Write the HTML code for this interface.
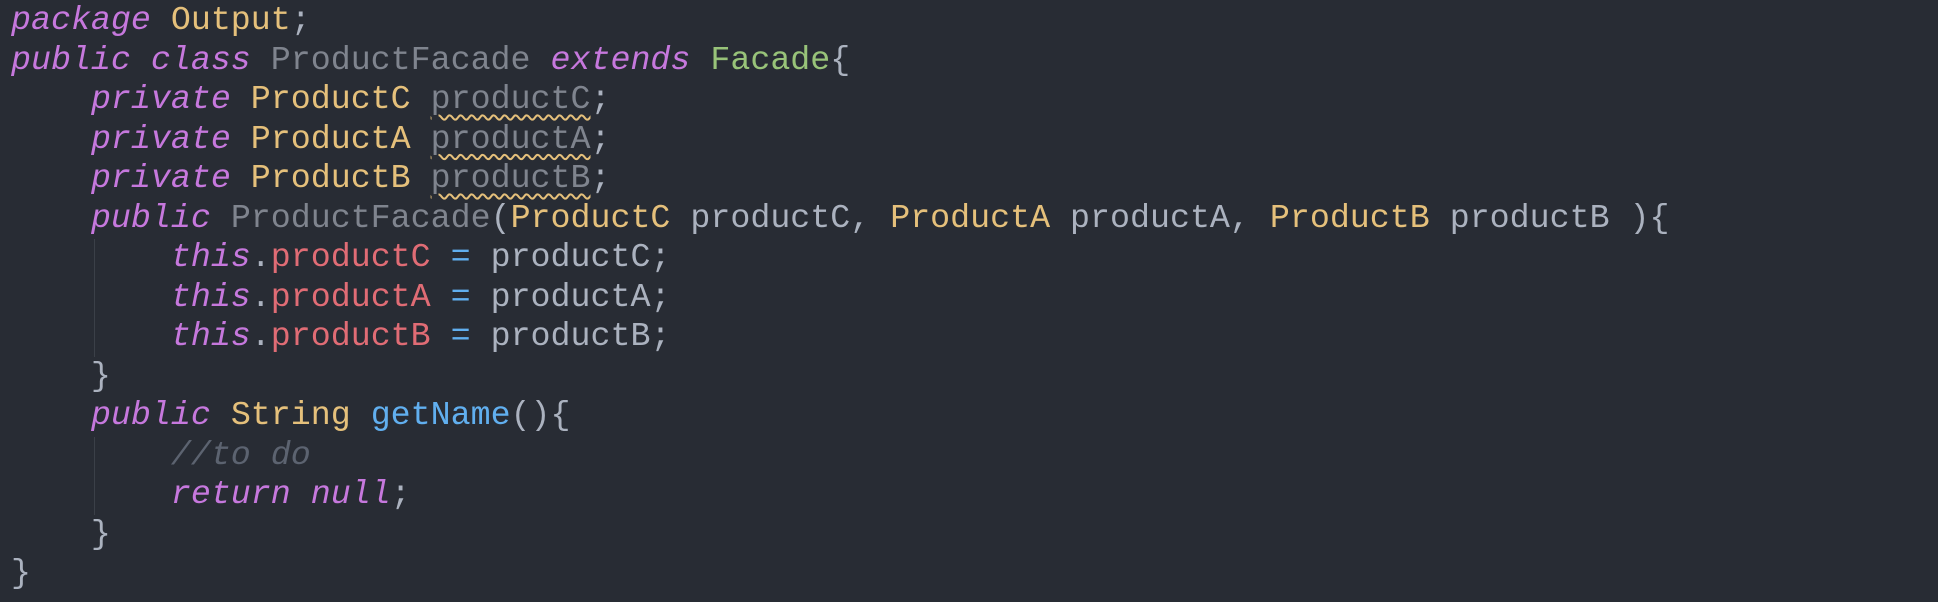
<!DOCTYPE html>
<html><head><meta charset="utf-8"><style>
html,body{margin:0;padding:0;background:#282c34;width:1938px;height:602px;overflow:hidden}
pre{position:absolute;left:11px;top:1px;margin:0;font-family:"Liberation Mono",monospace;font-size:33.3px;line-height:39.5px;color:#abb2bf}
.k{color:#c678dd;font-style:italic}
.t{color:#e5c07b}
.g{color:#7f848e}
.u{color:#7f848e;text-decoration:underline wavy #e5c07b;text-decoration-thickness:2px;text-underline-offset:6px}
.f{color:#e06c75}
.b{color:#61afef}
.c{color:#5c6370;font-style:italic}
.gr{color:#98c379}
.guide{position:absolute;left:94px;width:1px;background:#3b4048}
</style></head><body>
<div class="guide" style="top:239px;height:118px"></div>
<div class="guide" style="top:437px;height:78px"></div>
<pre><span class="k">package</span> <span class="t">Output</span>;
<span class="k">public class</span> <span class="g">ProductFacade</span> <span class="k">extends</span> <span class="gr">Facade</span>{
    <span class="k">private</span> <span class="t">ProductC</span> <span class="u">productC</span>;
    <span class="k">private</span> <span class="t">ProductA</span> <span class="u">productA</span>;
    <span class="k">private</span> <span class="t">ProductB</span> <span class="u">productB</span>;
    <span class="k">public</span> <span class="g">ProductFacade</span>(<span class="t">ProductC</span> productC, <span class="t">ProductA</span> productA, <span class="t">ProductB</span> productB ){
        <span class="k">this</span>.<span class="f">productC</span> <span class="b">=</span> productC;
        <span class="k">this</span>.<span class="f">productA</span> <span class="b">=</span> productA;
        <span class="k">this</span>.<span class="f">productB</span> <span class="b">=</span> productB;
    }
    <span class="k">public</span> <span class="t">String</span> <span class="b">getName</span>(){
        <span class="c">//to do</span>
        <span class="k">return null</span>;
    }
}</pre>
</body></html>
